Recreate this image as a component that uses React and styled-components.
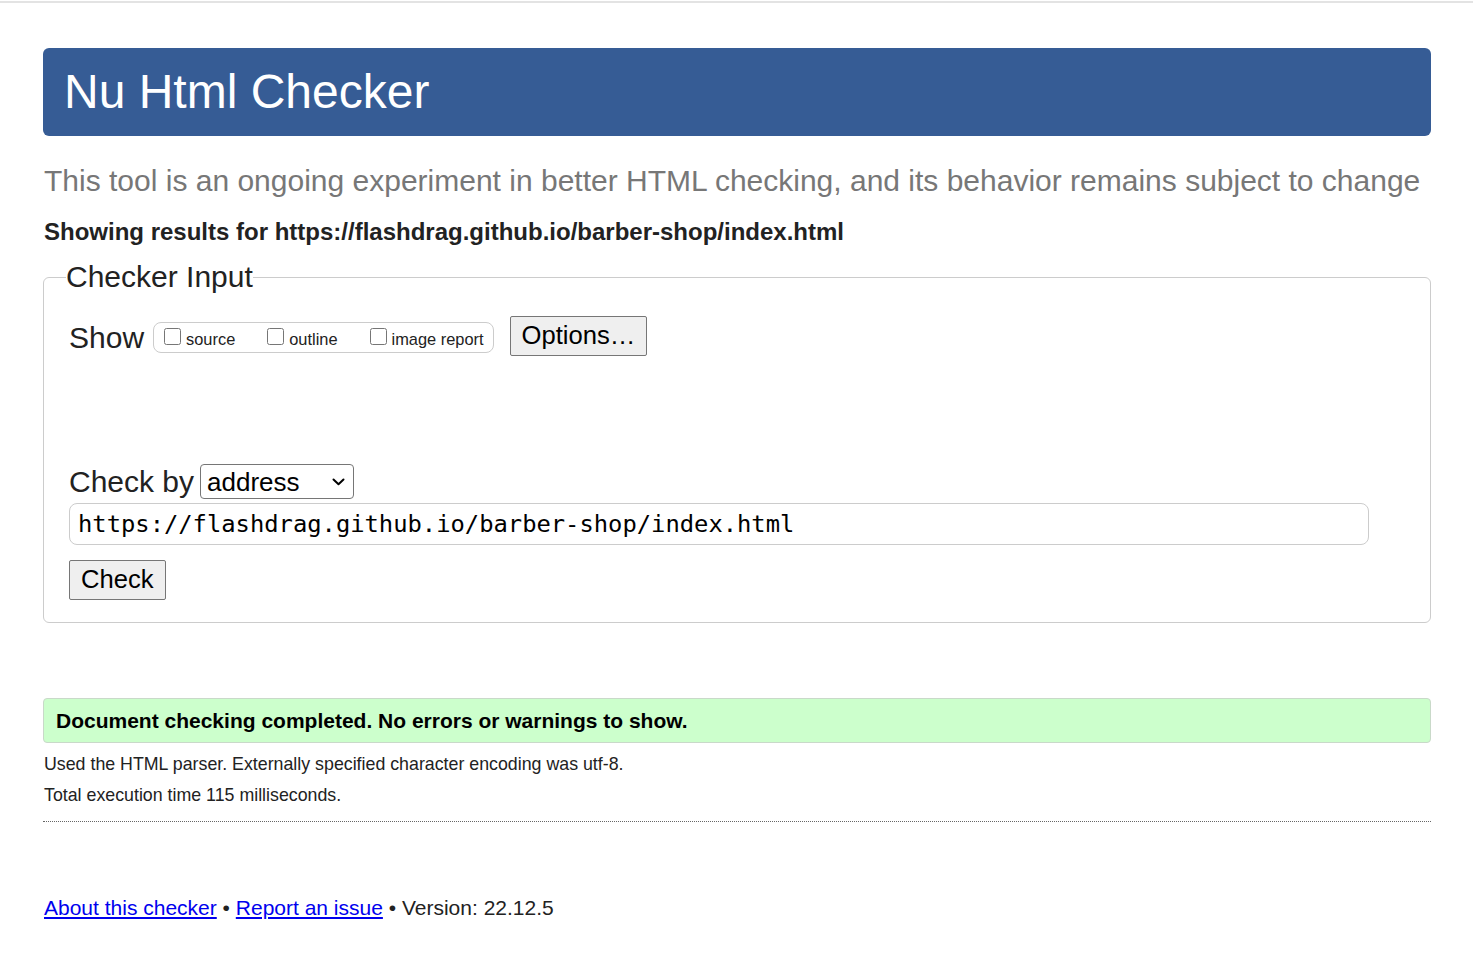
import React from "react";
import styled, { createGlobalStyle } from "styled-components";

const Global = createGlobalStyle`
  html, body { margin: 0; padding: 0; background: #fff; }
  body {
    font-family: "Liberation Sans", Arial, sans-serif;
    color: #222;
  }
`;

const TopRule = styled.div`
  height: 2px;
  margin-top: 1px;
  background: #e3e3e3;
`;

const Page = styled.div`
  padding: 0 42px 40px 43px;
`;

const Header = styled.header`
  margin-top: 45px;
  background: #365c95;
  border-radius: 6px;
  padding: 16px 22px 17px 21px;
`;

const Title = styled.h1`
  margin: 0;
  font-size: 48px;
  font-weight: normal;
  line-height: 55px;
  color: #fff;
`;

const Subtitle = styled.p`
  margin: 28px 0 0 1px;
  font-size: 30px;
  line-height: 34px;
  color: #777;
`;

const ResultsFor = styled.p`
  margin: 20px 0 0 1px;
  font-size: 24px;
  font-weight: bold;
  line-height: 27px;
  color: #222;
`;

const Fieldset = styled.fieldset`
  margin: 15px 0 0;
  padding: 25px 25px 22px;
  border: 1px solid #ccc;
  border-radius: 6px;
  min-width: 0;
`;

const Legend = styled.legend`
  margin-left: -3px;
  padding: 0;
  font-size: 30px;
  line-height: 34px;
  color: #222;
`;

const ShowRow = styled.div`
  display: flex;
  align-items: center;
  gap: 9px;
`;

const BigLabel = styled.span`
  font-size: 30px;
  line-height: 34px;
  color: #222;
`;

const ToggleGroup = styled.div`
  display: flex;
  align-items: center;
  height: 29px;
  border: 1px solid #ccc;
  border-radius: 8px;
  padding: 0 9px 0 9px;
  gap: 31px;
`;

const Toggle = styled.label`
  display: flex;
  align-items: center;
  font-size: 16.4px;
  color: #222;
  padding-top: 3px;
`;

const Box = styled.input`
  margin: -6px 5px 0 1px;
  width: 17px;
  height: 17px;
`;

const Button = styled.button`
  font-family: "Liberation Sans", Arial, sans-serif;
  font-size: 25.6px;
  line-height: 29px;
  color: #000;
  background: #efefef;
  border: 1px solid #767676;
  border-radius: 2px;
  padding: 4px 11px 5px;
  cursor: pointer;
`;

const OptionsButton = styled(Button)`
  margin-left: 7px;
  margin-top: -3px;
`;

const CheckByRow = styled.div`
  display: flex;
  align-items: center;
  gap: 6px;
  margin-top: 108px;
`;

const SelectWrap = styled.div`
  position: relative;
  display: inline-flex;
`;

const Select = styled.select`
  appearance: none;
  font-family: "Liberation Sans", Arial, sans-serif;
  font-size: 26px;
  height: 35px;
  width: 154px;
  padding: 0 30px 0 6px;
  border: 1px solid #767676;
  border-radius: 4px;
  background: #fff;
  color: #000;
`;

const Chevron = styled.svg`
  position: absolute;
  right: 9px;
  top: 50%;
  margin-top: -4px;
  width: 13px;
  height: 8px;
  pointer-events: none;
`;

const UrlInput = styled.input`
  display: block;
  box-sizing: border-box;
  width: 1300px;
  height: 42px;
  margin-top: 4px;
  padding: 0 8px;
  border: 1px solid #ccc;
  border-radius: 8px;
  font-family: "DejaVu Sans Mono", "Liberation Mono", monospace;
  font-size: 23.8px;
  color: #000;
  outline: none;
`;

const CheckButton = styled(Button)`
  display: block;
  margin-top: 15px;
`;

const Success = styled.div`
  margin-top: 75px;
  background: #ccffcc;
  border: 1px solid #c9d9c9;
  border-radius: 4px;
  padding: 10px 12px 9px;
  font-size: 21px;
  line-height: 24px;
  font-weight: bold;
  color: #000;
`;

const Detail = styled.p`
  margin: ${(p) => (p.$first ? "9px" : "7px")} 0 0 1px;
  font-size: 17.8px;
  line-height: 24px;
  color: #222;
`;

const Dotted = styled.hr`
  margin: 14px 0 0;
  border: 0;
  border-top: 1px dotted #666;
`;

const Footer = styled.p`
  margin: 74px 0 0 1px;
  font-size: 21px;
  line-height: 24px;
  color: #222;
`;

const Link = styled.a`
  color: #0000ee;
  text-decoration: underline;
`;

export default function App() {
  return (
    <>
      <Global />
      <TopRule />
      <Page>
        <Header>
          <Title>Nu Html Checker</Title>
        </Header>
        <Subtitle>
          This tool is an ongoing experiment in better HTML checking, and its behavior remains subject to change
        </Subtitle>
        <ResultsFor>Showing results for https://flashdrag.github.io/barber-shop/index.html</ResultsFor>
        <Fieldset>
          <Legend>Checker Input</Legend>
          <ShowRow>
            <BigLabel>Show</BigLabel>
            <ToggleGroup>
              <Toggle><Box type="checkbox" />source</Toggle>
              <Toggle><Box type="checkbox" />outline</Toggle>
              <Toggle><Box type="checkbox" />image report</Toggle>
            </ToggleGroup>
            <OptionsButton type="button">Options…</OptionsButton>
          </ShowRow>
          <CheckByRow>
            <BigLabel>Check by</BigLabel>
            <SelectWrap>
              <Select defaultValue="address">
                <option value="address">address</option>
                <option value="file">file upload</option>
                <option value="text">text input</option>
              </Select>
              <Chevron viewBox="0 0 13 8" aria-hidden="true">
                <path d="M1.5 1.5 L6.5 6.2 L11.5 1.5" fill="none" stroke="#000" strokeWidth="2" strokeLinecap="round" strokeLinejoin="round" />
              </Chevron>
            </SelectWrap>
          </CheckByRow>
          <UrlInput type="url" defaultValue="https://flashdrag.github.io/barber-shop/index.html" />
          <CheckButton type="button">Check</CheckButton>
        </Fieldset>
        <Success>Document checking completed. No errors or warnings to show.</Success>
        <Detail $first>Used the HTML parser. Externally specified character encoding was utf-8.</Detail>
        <Detail>Total execution time 115 milliseconds.</Detail>
        <Dotted />
        <Footer>
          <Link href="#about">About this checker</Link> • <Link href="#issue">Report an issue</Link> • Version: 22.12.5
        </Footer>
      </Page>
    </>
  );
}
